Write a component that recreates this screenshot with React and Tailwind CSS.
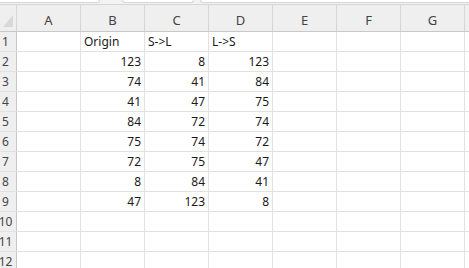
import React from 'react';

const columns = ['A', 'B', 'C', 'D', 'E', 'F', 'G', ''];

const data = [
    ['', 'Origin', 'S->L', 'L->S'],
    ['', 123, 8, 123],
    ['', 74, 41, 84],
    ['', 41, 47, 75],
    ['', 84, 72, 74],
    ['', 75, 74, 72],
    ['', 72, 75, 47],
    ['', 8, 84, 41],
    ['', 47, 123, 8],
];

function Cell({ value }) {
    const isNum = typeof value === 'number';
    return (
        <div className={`w-[64px] shrink-0 h-full border-r border-[#e1e1e1] flex items-end pb-[1px] px-[3px] ${isNum ? 'justify-end' : 'justify-start'}`}>
            <span className="leading-[16px] whitespace-nowrap">{value}</span>
        </div>
    );
}

function Row({ index, cells }) {
    return (
        <div className="flex h-[20px] shrink-0 border-b border-[#e1e1e1]">
            <div className="w-[17px] shrink-0 h-full bg-[#efefef] border-r border-[#c8c8c8] flex items-end pb-[1px]">
                <span className="w-[11px] flex justify-center leading-[16px] text-[#444]">{index}</span>
            </div>
            {columns.map((col, i) => (
                <Cell key={i} value={cells[i] ?? ''} />
            ))}
        </div>
    );
}

export default function App() {
    const rows = [];
    for (let i = 0; i < 12; i++) rows.push(data[i] || []);

    return (
        <div className="w-[469px] h-[268px] overflow-hidden bg-white text-[12px] text-[#1a1a1a] flex flex-col" style={{ fontFamily: '"Noto Sans", sans-serif' }}>
            {/* top strip with bits of the ribbon boxes */}
            <div className="h-[5px] shrink-0 bg-[#f3f3f3] border-b border-[#d6d6d6] flex items-start">
                <div className="w-[100px] h-[3px] bg-white border-b border-r border-[#d6d6d6] rounded-br-[6px]"></div>
                <div className="ml-[22px] w-[72px] h-[3px] bg-white border-b border-x border-[#d6d6d6] rounded-b-[6px]"></div>
                <div className="ml-[6px] flex-1 h-[3px] bg-white border-b border-l border-[#d6d6d6] rounded-bl-[6px]"></div>
            </div>

            {/* column headers */}
            <div className="flex h-[27px] shrink-0 bg-[#efefef] border-b border-[#c8c8c8]">
                <div className="w-[17px] shrink-0 h-full border-r border-[#d6d6d6] relative">
                    <svg width="17" height="26" className="absolute left-0 top-0">
                        <polygon points="3,22 13,10 13,22" fill="#d8d8d8" />
                    </svg>
                </div>
                {columns.map((col, i) => (
                    <div key={i} className="w-[64px] shrink-0 h-full border-r border-[#d6d6d6] flex items-end justify-center pb-[3px]">
                        <span className="text-[13px] leading-[16px] text-[#444]">{col}</span>
                    </div>
                ))}
            </div>

            {rows.map((cells, i) => (
                <Row key={i} index={i + 1} cells={cells} />
            ))}
        </div>
    );
}
